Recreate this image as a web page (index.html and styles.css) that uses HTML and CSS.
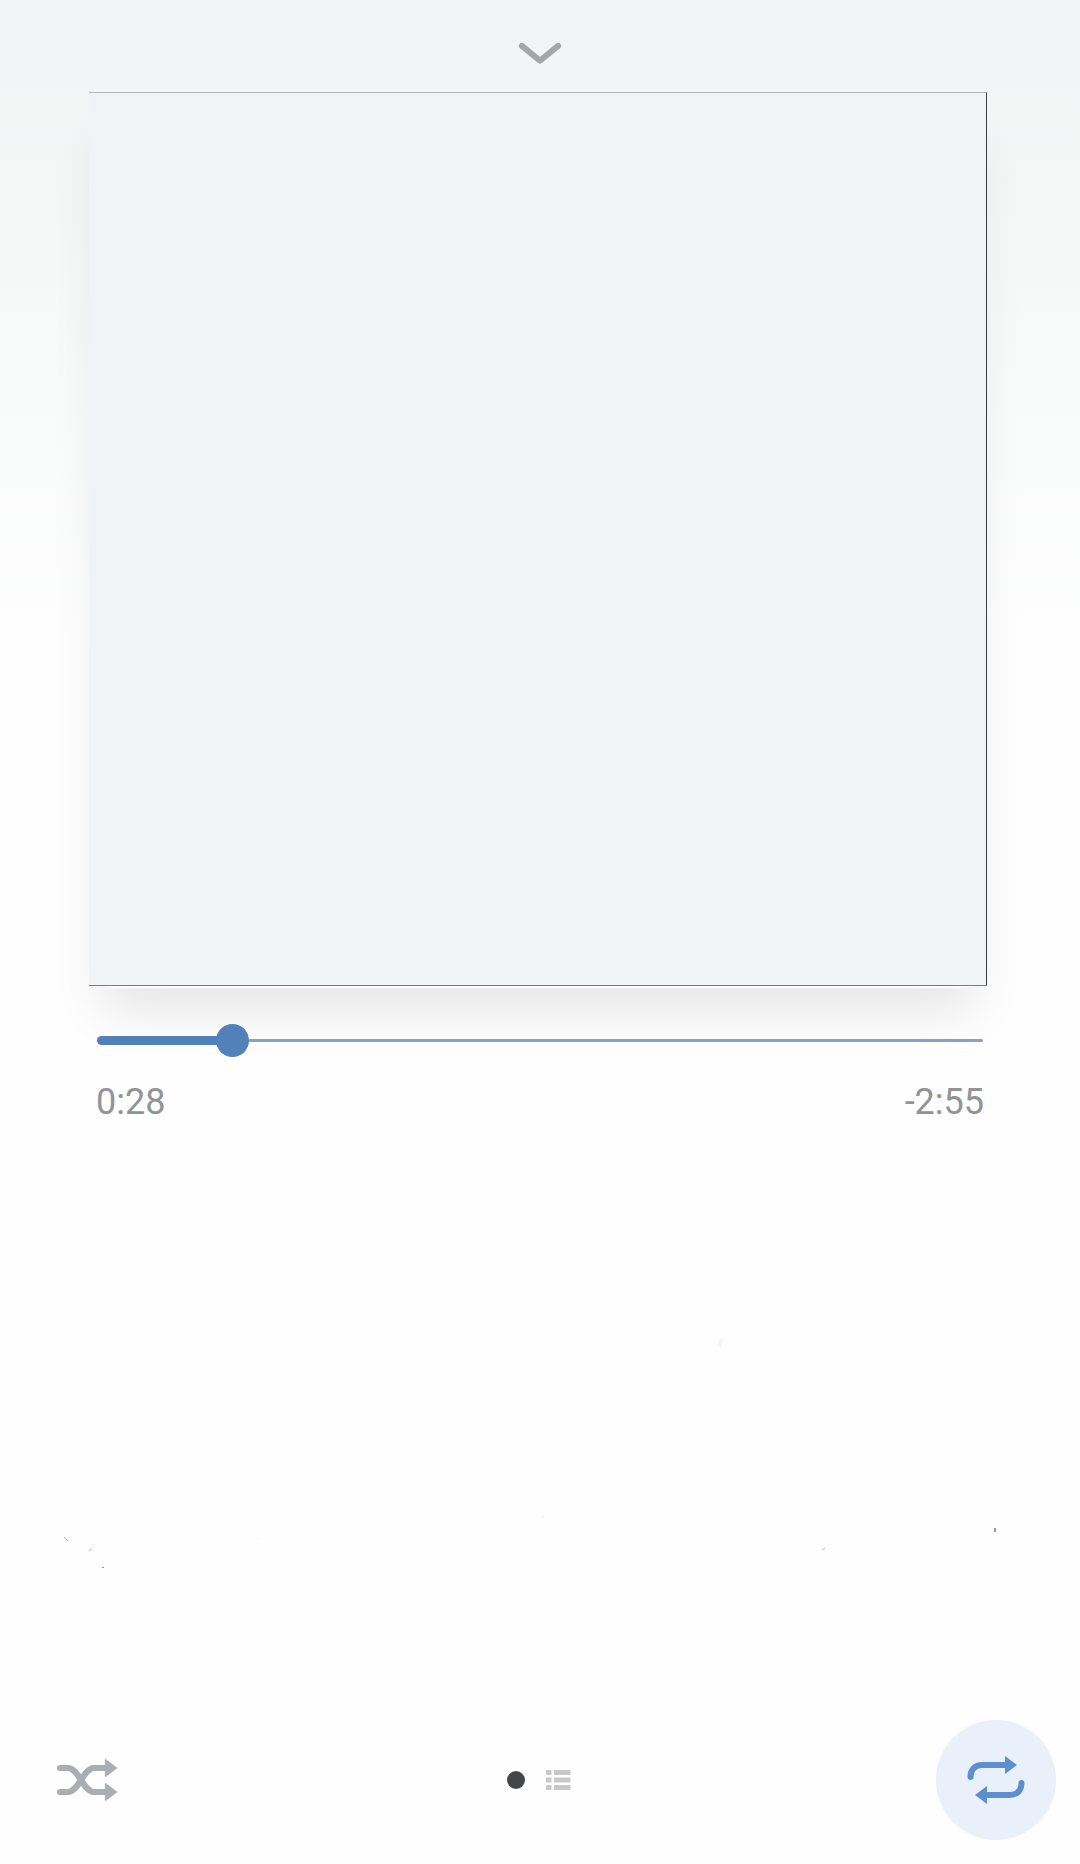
FILE: index.html
```html
<!DOCTYPE html>
<html lang="en">
<head>
<meta charset="utf-8">
<title>Player</title>
<link rel="stylesheet" href="styles.css">
</head>
<body>
<main class="player">
  <header class="top">
    <svg class="chevron" width="44" height="24" viewBox="0 0 44 24"><path d="M3.9 4.9 22 19.7 40.1 4.9"/></svg>
  </header>
  <div class="cover"><div class="artwork"></div></div>
  <section class="progress">
    <div class="slider">
      <div class="elapsed"></div>
      <div class="knob"></div>
      <div class="remaining"></div>
    </div>
    <div class="times"><span>0:28</span><span>-2:55</span></div>
  </section>
  <svg class="specks" width="1080" height="300" viewBox="0 1300 1080 300">
    <path d="m719 1347 3-8" stroke="#f3f7fb" stroke-width="4"/>
    <path d="m64 1537 4 4M89 1551l2-2M822 1550l3-2" stroke="#b8b8b8"/>
    <path d="M102 1567.5h2" stroke="#999"/>
    <path d="M257 1538.5h1M525 1506.5h1M542 1516.5h2" stroke="#eee"/>
    <path d="M995 1528v4" stroke="#999" stroke-width="2"/>
  </svg>
  <footer class="controls">
    <svg class="shuffle" width="64" height="46" viewBox="55 1757 64 46">
      <path class="line" d="M60 1768h8c11 0 15 24 26 24h12M60 1792h8c11 0 15-24 26-24h12"/>
      <path class="head" d="m105.3 1759.3 11.7 8.7-11.7 8.7zM105.3 1783.3l11.7 8.7-11.7 8.7z"/>
    </svg>
    <div class="pages">
      <span class="dot"></span>
      <svg class="list" width="25" height="20" viewBox="0 0 25 20"><path d="M0 0h5.5v5H0zM8 0h16.5v5H8zM0 7.5h5.5v5H0zM8 7.5h16.5v5H8zM0 15h5.5v5H0zM8 15h16.5v5H8z"/></svg>
    </div>
    <div class="repeat">
      <svg width="64" height="52" viewBox="964 1754 64 52">
        <path class="line" d="M970.5 1777c0-7.5 4.5-12 12-12H1006M1021.5 1783c0 7.5-4.5 12-12 12H986"/>
        <path d="m1005 1756 12 9-12 9zM987 1786l-12 9 12 9z"/>
      </svg>
    </div>
  </footer>
</main>
</body>
</html>
```
FILE: styles.css
```css
* { box-sizing: border-box; }
body { margin: 0; background: #fefefe; }
.player {
  display: flex;
  flex-direction: column;
  width: 1080px;
  height: 1864px;
  background: linear-gradient(#f1f3f5 0, #f4f6f6 150px, #fefefe 650px);
  font-family: Roboto, sans-serif;
}
.top { display: flex; justify-content: center; height: 92px; padding-top: 41px; }
.chevron path { fill: none; stroke: #a5a7a7; stroke-width: 6; stroke-linecap: round; stroke-linejoin: round; }
.cover {
  width: 898px;
  height: 896px;
  margin-left: 89px;
  border-radius: 24px;
  background: #fefefe;
  box-shadow: 0 36px 50px -12px rgba(0, 0, 0, .095);
}
.artwork {
  width: 898px;
  height: 894px;
  background: #f1f3f5;
  border-top: 1px solid #b4b6b9;
  border-right: 1px solid #3c3d3e;
  border-bottom: 1px solid #7b7e80;
}
.progress { height: 312px; padding: 36px 97px 0 97px; position: relative; }
.slider { display: flex; align-items: center; height: 33px; }
.elapsed { width: 121px; height: 9px; border-radius: 5px 0 0 5px; background: #5181b8; }
.knob { width: 33px; height: 33px; margin-left: -2px; border-radius: 50%; background: #5181b8; }
.remaining { flex: 1; height: 3px; border-radius: 0 2px 2px 0; background: #85a3c5; }
.times {
  display: flex;
  justify-content: space-between;
  margin: 24px -1px 0;
  font-size: 36px;
  line-height: 42px;
  color: #909499;
}
.specks { display: block; fill: none; }
.controls { display: flex; justify-content: space-between; align-items: center; height: 120px; margin-top: 120px; padding: 0 24px 0 55px; }
.shuffle { fill: #aaaeb3; }
.line { fill: none; stroke-width: 6; stroke-linecap: round; }
.shuffle .line { stroke: #aaaeb3; stroke-width: 6.2; }
.head { stroke: #aaaeb3; stroke-width: .8; stroke-linejoin: round; }
.pages { display: flex; align-items: center; gap: 21px; margin-left: 23px; }
.dot { width: 18px; height: 18px; border-radius: 50%; background: #454647; }
.list { fill: #c8c8c8; }
.repeat { display: flex; align-items: center; justify-content: center; width: 120px; height: 120px; border-radius: 50%; background: #e9f0f9; fill: #5b8fce; }
.repeat .line { stroke: #5b8fce; }
```
